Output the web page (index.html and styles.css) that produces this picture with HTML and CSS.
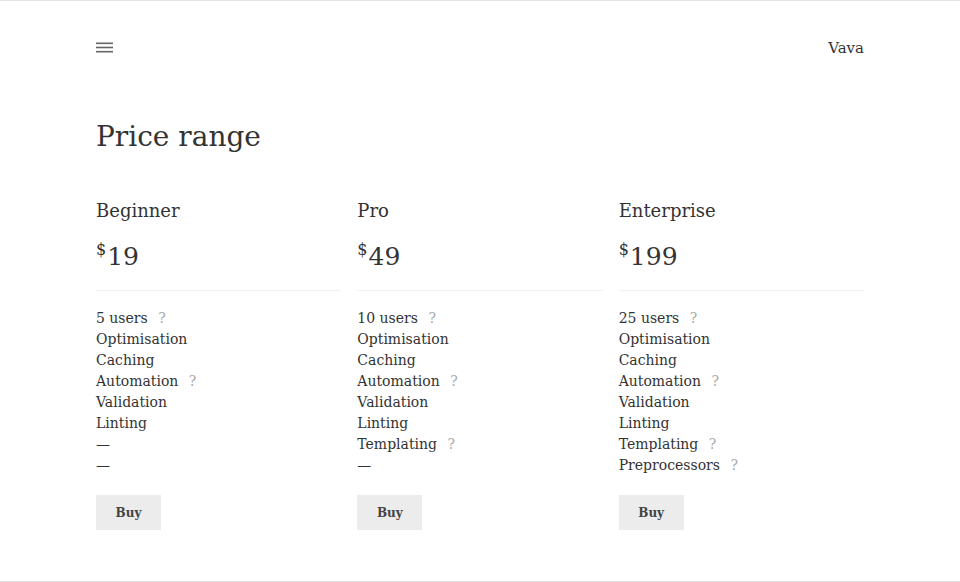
FILE: index.html
```html
<!DOCTYPE html>
<html lang="en">
<head>
<meta charset="utf-8">
<title>Price range</title>
<link rel="stylesheet" href="styles.css">
</head>
<body>
<div class="page">
  <header class="top">
    <button class="menu" aria-label="Menu">
      <svg width="17" height="11" viewBox="0 0 17 11"><rect x="0" y="0.5" width="17" height="1.6" fill="#666"/><rect x="0" y="4.7" width="17" height="1.6" fill="#666"/><rect x="0" y="8.9" width="17" height="1.6" fill="#666"/></svg>
    </button>
    <div class="brand">Vava</div>
  </header>
  <main class="content">
    <h1 class="title">Price range</h1>
    <div class="plans">
      <section class="plan">
        <h2 class="plan-name">Beginner</h2>
        <div class="price"><span class="cur">$</span>19</div>
        <ul class="features">
          <li>5 users <span class="q">?</span></li>
          <li>Optimisation</li>
          <li>Caching</li>
          <li>Automation <span class="q">?</span></li>
          <li>Validation</li>
          <li>Linting</li>
          <li>—</li>
          <li>—</li>
        </ul>
        <button class="buy">Buy</button>
      </section>
      <section class="plan">
        <h2 class="plan-name">Pro</h2>
        <div class="price"><span class="cur">$</span>49</div>
        <ul class="features">
          <li>10 users <span class="q">?</span></li>
          <li>Optimisation</li>
          <li>Caching</li>
          <li>Automation <span class="q">?</span></li>
          <li>Validation</li>
          <li>Linting</li>
          <li>Templating <span class="q">?</span></li>
          <li>—</li>
        </ul>
        <button class="buy">Buy</button>
      </section>
      <section class="plan">
        <h2 class="plan-name">Enterprise</h2>
        <div class="price"><span class="cur">$</span>199</div>
        <ul class="features">
          <li>25 users <span class="q">?</span></li>
          <li>Optimisation</li>
          <li>Caching</li>
          <li>Automation <span class="q">?</span></li>
          <li>Validation</li>
          <li>Linting</li>
          <li>Templating <span class="q">?</span></li>
          <li>Preprocessors <span class="q">?</span></li>
        </ul>
        <button class="buy">Buy</button>
      </section>
    </div>
  </main>
</div>
</body>
</html>
```
FILE: styles.css
```css
html, body {
  margin: 0;
  padding: 0;
  background: #fff;
}
body {
  font-family: "DejaVu Serif", "Liberation Serif", serif;
  color: #333;
  height: 582px;
  box-sizing: border-box;
  border-top: 1px solid #e3e3e3;
  border-bottom: 1px solid #e3e3e3;
  overflow: hidden;
}
.page {
  width: 768px;
  margin: 0 auto;
}
.top {
  display: flex;
  justify-content: space-between;
  align-items: center;
  padding-top: 34px;
  height: 24px;
}
.menu {
  background: none;
  border: 0;
  padding: 0;
  margin: 0;
  display: flex;
  width: 17px;
  height: 11px;
}
.brand {
  font-size: 15px;
  color: #333;
  padding-top: 2px;
}
.title {
  font-weight: normal;
  font-size: 28px;
  margin: 58px 0 0;
  line-height: 40px;
  color: #333;
}
.plans {
  display: grid;
  grid-template-columns: repeat(3, 1fr);
  gap: 16px;
  margin-top: 42px;
}
.plan-name {
  font-weight: normal;
  font-size: 18px;
  margin: 0;
  line-height: 24px;
}
.price {
  font-size: 25px;
  line-height: 32px;
  margin-top: 11px;
  padding-bottom: 17px;
  border-bottom: 1px solid #f2f2f2;
}
.cur {
  font-size: 16px;
  vertical-align: 10px;
  margin-right: 1px;
}
.features {
  list-style: none;
  margin: 17px 0 0;
  padding: 0;
  font-size: 14px;
  line-height: 21px;
}
.q {
  color: #aaa;
  margin-left: 6px;
}
.buy {
  margin-top: 19px;
  width: 65px;
  height: 35px;
  border: 0;
  background: #ececec;
  font-family: inherit;
  font-size: 12px;
  font-weight: bold;
  color: #444;
  padding: 0;
}
```
